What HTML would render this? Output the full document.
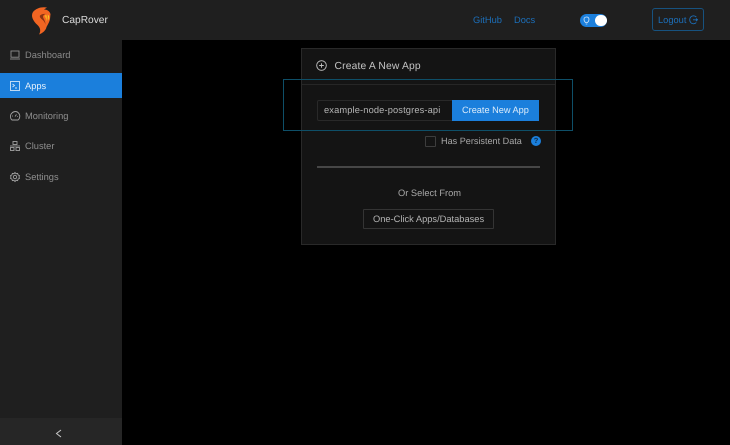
<!DOCTYPE html>
<html><head><meta charset="utf-8">
<style>
*{box-sizing:border-box;margin:0;padding:0}
html,body{width:730px;height:445px;overflow:hidden;background:#000;font-family:"Liberation Sans",sans-serif;text-rendering:geometricPrecision}
.a{position:absolute;white-space:nowrap}
.t{line-height:12px;font-size:9.3px}
svg{position:absolute;overflow:visible}
</style></head><body>
<div class="a" style="left:0;top:0;width:730px;height:40px;background:#1f1f1f"></div>
<div class="a" style="left:0;top:40px;width:122px;height:405px;background:#1f1f1f"></div>
<div class="a" style="left:0;top:418px;width:122px;height:27px;background:#262626"></div>
<div class="a" style="left:0;top:73px;width:122px;height:25px;background:#1b7fdc"></div>

<svg style="left:31px;top:6px" width="22" height="29" viewBox="0 0 22 29">
<path d="M2 6C5 2 11 0.500 16 1.500L13 3.500C16 3.500 18.500 5 19.500 8L19 13C18.500 16 16.500 19 15.500 21C15 24 12 27 8 28.500C10 25 9.500 22 6.500 19C2 15 -0.500 10 2 6Z" fill="#f26522"/>
<path d="M9 9.500C10.500 8 13 7.500 15 8C12.500 8.500 11.500 10 12.300 12C13.500 14 14.500 16 14.500 19C14 15.500 11.500 14 10 12.500C9 11.500 8.500 10.500 9 9.500Z" fill="#8a3413"/>
<path d="M14.500 8.500C16.500 9.500 17 12 15.800 15.500C15.500 13 14.500 11.500 13.500 10.500C13.500 9.500 14 9 14.500 8.500Z" fill="#f7a81d"/>
<path d="M16.500 8.500C18.500 9.500 18.800 12 17.300 14.500C17.500 12.500 17.200 10.500 16.500 8.500Z" fill="#f5d327"/>
</svg>
<div class="a" style="left:62px;top:14px;font-size:10.2px;line-height:13px;color:#dcdcdc">CapRover</div>

<svg style="left:10px;top:50px" width="10" height="10" viewBox="0 0 10 10" fill="none" stroke="#8f8f8f" stroke-width=".9"><rect x="1" y="1" width="8" height="6.2"/><path d="M0 9h10"/></svg>
<div class="a t" style="left:25px;top:49px;color:#8a8a8a">Dashboard</div>

<svg style="left:10px;top:81px" width="10" height="10" viewBox="0 0 10 10" fill="none" stroke="#cfe4f8" stroke-width=".9"><rect x=".5" y=".5" width="9" height="9"/><path d="M2.500 3l2 1.500-2 1.500M5 7h2"/></svg>
<div class="a t" style="left:25px;top:80px;color:#e4f0fb">Apps</div>

<svg style="left:10px;top:111px" width="10" height="10" viewBox="0 0 10 10" fill="none" stroke="#a0a0a0" stroke-width=".9"><path d="M2 9C0 7.500 0 3.500 2 2C4 0 7 0 8.500 2C10.500 4 10 7.500 8 9Z"/><path d="M5 5.500L6.500 3.500M2.200 5h.8M7.200 5.500h.6"/></svg>
<div class="a t" style="left:25px;top:110px;color:#8f8f8f">Monitoring</div>

<svg style="left:10px;top:141px" width="10" height="10" viewBox="0 0 10 10" fill="none" stroke="#a0a0a0" stroke-width=".9"><rect x="3" y=".5" width="4" height="3"/><rect x=".5" y="6.500" width="3.500" height="3"/><rect x="6" y="6.500" width="3.500" height="3"/><path d="M0 5h10"/></svg>
<div class="a t" style="left:25px;top:140px;color:#8f8f8f">Cluster</div>

<svg style="left:10px;top:172px" width="10" height="10" viewBox="0 0 10 10" fill="none" stroke="#a0a0a0" stroke-width=".9"><path d="M5 .5l1 1.200 1.600-.3.500 1.500 1.400.8-.5 1.300.5 1.300-1.400.8-.5 1.500-1.600-.3-1 1.200-1-1.200-1.600.3-.5-1.500-1.400-.8.500-1.300-.5-1.300 1.400-.8.500-1.500 1.600.3z"/><circle cx="5" cy="5" r="1.700"/></svg>
<div class="a t" style="left:25px;top:171px;color:#8f8f8f">Settings</div>

<svg style="left:55px;top:429px" width="7" height="9" viewBox="0 0 7 9" fill="none" stroke="#c8c8c8" stroke-width="1"><path d="M6 1L1.500 4.500L6 8"/></svg>

<div class="a t" style="left:473px;top:14px;color:#1c6fba">GitHub</div>
<div class="a t" style="left:514px;top:14px;color:#1c6fba">Docs</div>
<div class="a" style="left:580px;top:13.500px;width:27px;height:13.500px;border-radius:7px;background:#1b7fdc"></div>
<div class="a" style="left:595px;top:14.500px;width:11.500px;height:11.500px;border-radius:50%;background:#fff"></div>
<svg style="left:583px;top:16px" width="7" height="9" viewBox="0 0 7 9" fill="none" stroke="#d5e8fa" stroke-width=".8"><path d="M2.500 6.500C1.800 5.500 1 5 1 3.500C1 2 2 1 3.500 1C5 1 6 2 6 3.500C6 5 5.200 5.500 4.500 6.500ZM2.700 8h1.600"/></svg>
<div class="a" style="left:652px;top:8px;width:51.500px;height:23px;border:1px solid #17527f;border-radius:3px"></div>
<div class="a t" style="left:658px;top:14px;color:#1c6fba">Logout</div>
<svg style="left:689px;top:15px" width="9" height="10" viewBox="0 0 9 10" fill="none" stroke="#1c6fba" stroke-width=".9"><path d="M7.300 2C6.500 1.200 5.500.8 4.500.8C2.300.8.700 2.600.700 4.800C.700 7 2.300 8.800 4.500 8.800C5.500 8.800 6.500 8.400 7.300 7.600M4 4.800H8.500M7 3.500l1.500 1.300L7 6.100"/></svg>

<div class="a" style="left:301px;top:48px;width:255px;height:197px;background:#141414;border:1px solid #292929"></div>
<div class="a" style="left:302px;top:84px;width:253px;height:1px;background:#262626"></div>
<svg style="left:316px;top:60px" width="11" height="11" viewBox="0 0 11 11" fill="none" stroke="#c4c4c4" stroke-width=".9"><circle cx="5.500" cy="5.500" r="4.800"/><path d="M3.200 5.500h4.600M5.500 3.200v4.600"/></svg>
<div class="a" style="left:334.500px;top:60px;font-size:10.300px;line-height:13px;letter-spacing:.17px;color:#c4c4c4">Create A New App</div>

<div class="a" style="left:283px;top:79px;width:290px;height:52px;border:1px solid #0e4f68"></div>

<div class="a" style="left:317px;top:100px;width:136px;height:20.500px;background:#141414;border:1px solid #292929;border-radius:2px 0 0 2px"></div>
<div class="a t" style="left:324px;top:104px;color:#b4b4b4;letter-spacing:.13px">example-node-postgres-api</div>
<div class="a" style="left:452px;top:100px;width:87px;height:20.500px;background:#1b7fdc"></div>
<div class="a t" style="left:462px;top:104px;color:#dcecfa;font-size:9.2px">Create New App</div>

<div class="a" style="left:425px;top:136px;width:11px;height:11px;background:#141414;border:1px solid #3d3d3d;border-radius:1px"></div>
<div class="a t" style="left:441px;top:135px;color:#a8a8a8;font-size:9.1px">Has Persistent Data</div>
<div class="a" style="left:531px;top:136px;width:10px;height:10px;border-radius:50%;background:#1b7fdc;color:#0c2c4a;font-size:7.500px;line-height:10px;text-align:center;font-weight:bold">?</div>

<div class="a" style="left:317px;top:166px;width:223px;height:2px;background:#464646"></div>
<div class="a t" style="left:398px;top:187px;color:#a8a8a8">Or Select From</div>
<div class="a" style="left:363px;top:209px;width:131px;height:20px;border:1px solid #343434;border-radius:1px"></div>
<div class="a t" style="left:373px;top:213px;color:#b4b4b4">One-Click Apps/Databases</div>
</body></html>
